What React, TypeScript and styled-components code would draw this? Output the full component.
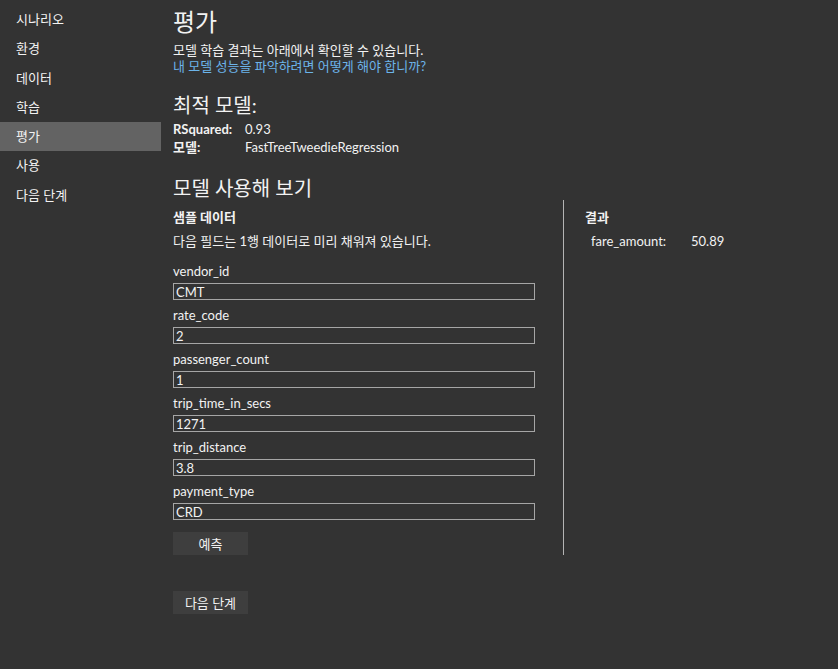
import React from 'react';
import styled, { createGlobalStyle } from 'styled-components';

const fontStack = `Lato, 'Noto Sans CJK KR', sans-serif`;

const GlobalStyle = createGlobalStyle`
  html, body {
    margin: 0;
    padding: 0;
    background-color: #333333;
  }
  body {
    font-family: ${fontStack};
    font-size: 13px;
    color: #f2f2f2;
  }
`;

const navItems = ['시나리오', '환경', '데이터', '학습', '평가', '사용', '다음 단계'];

const fields = [
  { name: 'vendor_id', value: 'CMT' },
  { name: 'rate_code', value: '2' },
  { name: 'passenger_count', value: '1' },
  { name: 'trip_time_in_secs', value: '1271' },
  { name: 'trip_distance', value: '3.8' },
  { name: 'payment_type', value: 'CRD' },
];

const App = () => {
  const active = '평가';

  return (
    <>
      <GlobalStyle />
      <Page>
        <Sidebar>
          {navItems.map((item) => (
            <NavItem key={item} selected={item === active}>
              {item}
            </NavItem>
          ))}
        </Sidebar>
        <Main>
          <Title>평가</Title>
          <Intro>모델 학습 결과는 아래에서 확인할 수 있습니다.</Intro>
          <HelpLink href="#">내 모델 성능을 파악하려면 어떻게 해야 합니까?</HelpLink>

          <Heading>최적 모델:</Heading>
          <Metrics>
            <MetricLabel>RSquared:</MetricLabel>
            <span>0.93</span>
            <MetricLabel>모델:</MetricLabel>
            <span>FastTreeTweedieRegression</span>
          </Metrics>

          <Heading top={20}>모델 사용해 보기</Heading>
          <TrySection>
            <InputColumn>
              <SubHead>샘플 데이터</SubHead>
              <Description>다음 필드는 1행 데이터로 미리 채워져 있습니다.</Description>
              <Fields>
                {fields.map((f) => (
                  <Field key={f.name}>
                    <FieldLabel>{f.name}</FieldLabel>
                    <FieldInput defaultValue={f.value} />
                  </Field>
                ))}
              </Fields>
              <ActionButton>예측</ActionButton>
            </InputColumn>
            <ResultColumn>
              <SubHead>결과</SubHead>
              <ResultRow>
                <ResultKey>fare_amount:</ResultKey>
                <span>50.89</span>
              </ResultRow>
            </ResultColumn>
          </TrySection>

          <NextButton>다음 단계</NextButton>
        </Main>
      </Page>
    </>
  );
};

const Page = styled.div`
  display: flex;
  flex-direction: row;
  min-height: 669px;
`;

const Sidebar = styled.nav`
  width: 161px;
  flex-shrink: 0;
  padding-top: 5px;
  display: flex;
  flex-direction: column;
`;

const NavItem = styled.div<{ selected: boolean }>`
  height: 29.25px;
  line-height: 29.25px;
  padding-left: 16px;
  background-color: ${({ selected }) => (selected ? '#636363' : 'transparent')};
  cursor: pointer;
`;

const Main = styled.main`
  flex: 1;
  padding-left: 12px;
  padding-top: 6px;
  display: flex;
  flex-direction: column;
  align-items: flex-start;
`;

const Title = styled.h1`
  margin: 0;
  font-size: 24px;
  font-weight: 400;
  line-height: 32px;
`;

const Intro = styled.div`
  margin-top: 4px;
  line-height: 16px;
`;

const HelpLink = styled.a`
  line-height: 16px;
  color: #6cb4ea;
  text-decoration: none;
`;

const Heading = styled.h2<{ top?: number }>`
  margin: ${({ top }) => top ?? 19}px 0 0;
  font-size: 20px;
  font-weight: 400;
  line-height: 24px;
`;

const Metrics = styled.div`
  margin-top: 3px;
  display: grid;
  grid-template-columns: 72px auto;
  line-height: 18px;
`;

const MetricLabel = styled.span`
  font-weight: 700;
`;

const TrySection = styled.div`
  display: flex;
  flex-direction: row;
`;

const InputColumn = styled.div`
  width: 390px;
  display: flex;
  flex-direction: column;
  align-items: flex-start;
`;

const ResultColumn = styled.div`
  border-left: 1px solid #b4b4b4;
  padding-left: 21px;
  width: 220px;
`;

const SubHead = styled.div`
  margin-top: 7px;
  font-weight: 700;
  line-height: 20px;
`;

const Description = styled.div`
  margin-top: 4px;
  line-height: 20px;
`;

const Fields = styled.div`
  margin-top: 10px;
  display: flex;
  flex-direction: column;
`;

const Field = styled.div`
  display: flex;
  flex-direction: column;
  margin-bottom: 5px;
`;

const FieldLabel = styled.label`
  line-height: 20px;
  margin-bottom: 2px;
`;

const FieldInput = styled.input`
  box-sizing: border-box;
  width: 362px;
  height: 17px;
  margin: 0;
  padding: 0 2px;
  border: 1px solid #a6a6a6;
  background-color: #333333;
  color: #f2f2f2;
  font-family: ${fontStack};
  font-size: 13px;
  outline: none;
`;

const ActionButton = styled.button`
  margin-top: 7px;
  width: 75px;
  height: 23px;
  border: none;
  padding: 0;
  background-color: #3e3e3e;
  color: #f2f2f2;
  font-family: ${fontStack};
  font-size: 13px;
  cursor: pointer;
`;

const NextButton = styled(ActionButton)`
  margin-top: 36px;
`;

const ResultRow = styled.div`
  margin-top: 4px;
  padding-left: 6px;
  display: flex;
  line-height: 20px;
`;

const ResultKey = styled.span`
  width: 100px;
`;

export default App;
